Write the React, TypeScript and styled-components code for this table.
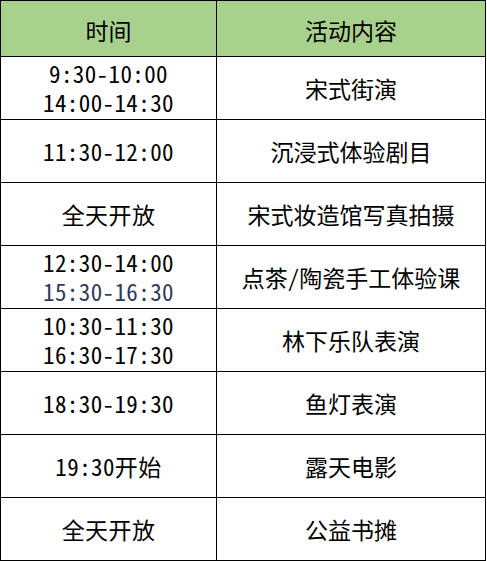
import React from "react"
import styled, { createGlobalStyle } from "styled-components"

const GlobalStyle = createGlobalStyle`
  html, body {
    margin: 0;
    padding: 0;
    background: #ffffff;
  }
  body {
    font-family: "Noto Sans CJK SC", "Noto Sans", sans-serif;
  }
`

interface Row {
  times: { text: string; muted?: boolean }[]
  activity: string
}

const rows: Row[] = [
  { times: [{ text: "9:30-10:00" }, { text: "14:00-14:30" }], activity: "宋式街演" },
  { times: [{ text: "11:30-12:00" }], activity: "沉浸式体验剧目" },
  { times: [{ text: "全天开放" }], activity: "宋式妆造馆写真拍摄" },
  {
    times: [{ text: "12:30-14:00" }, { text: "15:30-16:30", muted: true }],
    activity: "点茶/陶瓷手工体验课",
  },
  { times: [{ text: "10:30-11:30" }, { text: "16:30-17:30" }], activity: "林下乐队表演" },
  { times: [{ text: "18:30-19:30" }], activity: "鱼灯表演" },
  { times: [{ text: "19:30开始" }], activity: "露天电影" },
  { times: [{ text: "全天开放" }], activity: "公益书摊" },
]

const Table = styled.div`
  display: grid;
  grid-template-columns: 216px 269px;
  grid-auto-rows: 63px;
  grid-template-rows: 56px;
  width: 486px;
  border-left: 1px solid #000;
  border-top: 1px solid #000;
  box-sizing: border-box;
`

const Cell = styled.div<{ $head?: boolean }>`
  display: flex;
  flex-direction: column;
  align-items: center;
  justify-content: center;
  box-sizing: border-box;
  border-right: 1px solid #000;
  border-bottom: 1px solid #000;
  background: ${({ $head }) => ($head ? "#a9d18e" : "#ffffff")};
  padding-top: ${({ $head }) => ($head ? "4px" : "0")};
  font-size: 23px;
  line-height: 29px;
  color: #000;
  font-feature-settings: "hwid" 1;
  white-space: nowrap;
`

const Line = styled.span<{ $muted?: boolean }>`
  color: ${({ $muted }) => ($muted ? "#2e3b5e" : "#000")};
  letter-spacing: 0.4px;
`

export default function App() {
  return (
    <>
      <GlobalStyle />
      <Table>
        <Cell $head>时间</Cell>
        <Cell $head>活动内容</Cell>
        {rows.map((row, i) => (
          <React.Fragment key={i}>
            <Cell>
              {row.times.map((t, j) => (
                <Line key={j} $muted={t.muted}>
                  {t.text}
                </Line>
              ))}
            </Cell>
            <Cell>{row.activity}</Cell>
          </React.Fragment>
        ))}
      </Table>
    </>
  )
}
